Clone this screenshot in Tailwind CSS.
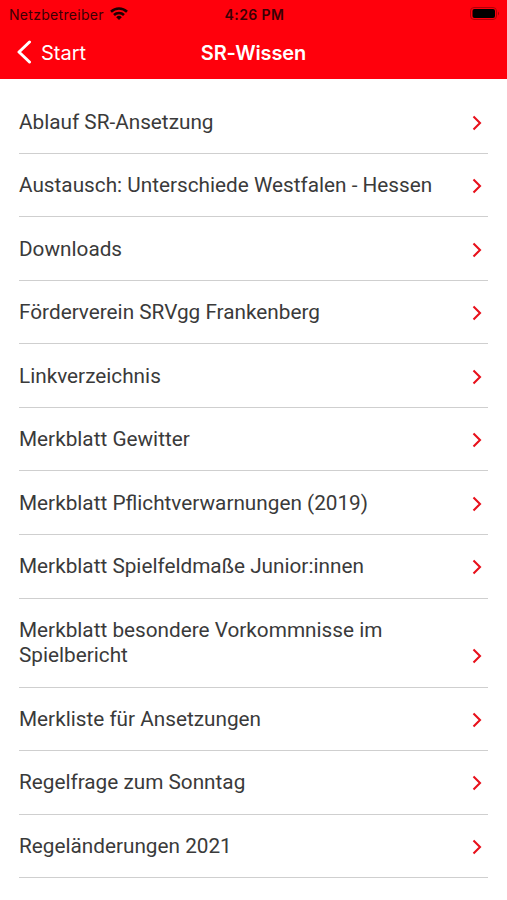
<!DOCTYPE html>
<html lang="de"><head><meta charset="utf-8"><title>SR-Wissen</title>
<script src="https://cdn.jsdelivr.net/npm/@tailwindcss/browser@4"></script></head>
<body class="bg-white w-[507px] h-[900px] overflow-hidden font-['Roboto',sans-serif] text-[#3a3a3a]">
<header class="bg-[#ff000c] h-[79px] font-[Inter,sans-serif]">
<div class="h-[27px] grid grid-cols-3 items-center pl-[9px] pr-[7px] text-[#3a0004]">
<div class="flex items-center gap-[6px] text-[14px] whitespace-nowrap"><span class="tracking-[0.3px] pt-px">Netzbetreiber</span>
<svg width="18" height="13" viewBox="0 0 18 13" fill="none" stroke="#1d0002" stroke-width="2.6"><path d="M1 4.7a11.5 11.5 0 0 1 16 0M4 8a7.2 7.2 0 0 1 10 0"/><path d="M9 13L6.2 10.2a4 4 0 0 1 5.6 0z" fill="#1d0002" stroke="none"/></svg></div>
<div class="text-center text-[14px] font-semibold tracking-[0.4px] pt-px">4:26 PM</div>
<div class="flex justify-end"><svg width="30" height="13" viewBox="0 0 30 13"><rect x=".5" y=".5" width="26" height="12" rx="3.5" fill="none" stroke="#b00008"/><rect x="2.5" y="2" width="22.5" height="9" rx="2" fill="#000"/><path d="M28 4.5q2 2 0 4z" fill="#a00008"/></svg></div>
</div>
<div class="h-[51px] grid grid-cols-3 items-center text-white text-[20px]">
<div class="flex items-center gap-[9px] pl-[17px]"><svg class="-mt-px" width="15" height="24" viewBox="0 0 15 24" fill="none" stroke="#fff" stroke-width="3" stroke-linecap="round" stroke-linejoin="round"><path d="M12.5 2L2 12L12.5 22"/></svg><span>Start</span></div>
<div class="text-center font-semibold tracking-[-0.1px]">SR-Wissen</div></div>
</header>
<main id="list" class="px-[19px] pt-[11.3px]"></main>
<script>
const items=["Ablauf SR-Ansetzung","Austausch: Unterschiede Westfalen - Hessen","Downloads","Förderverein SRVgg Frankenberg","Linkverzeichnis","Merkblatt Gewitter","Merkblatt Pflichtverwarnungen (2019)","Merkblatt Spielfeldmaße Junior:innen","Merkblatt besondere Vorkommnisse im Spielbericht","Merkliste für Ansetzungen","Regelfrage zum Sonntag","Regeländerungen 2021"];
document.getElementById("list").innerHTML=items.map(t=>`<div class="flex items-end justify-between border-b border-[#cfcfcf] pt-[19.24px] pb-[17.8px] text-[20.75px] leading-[25.5px]"><span class="w-[420px]">${t}</span><svg class="mb-[4.5px] mr-[6px]" width="10" height="16" viewBox="0 0 10 16" fill="none" stroke="#e8101b" stroke-width="2.1"><path d="M1.5 1.5L8 8L1.5 14.5"/></svg></div>`).join("");
</script></body></html>
